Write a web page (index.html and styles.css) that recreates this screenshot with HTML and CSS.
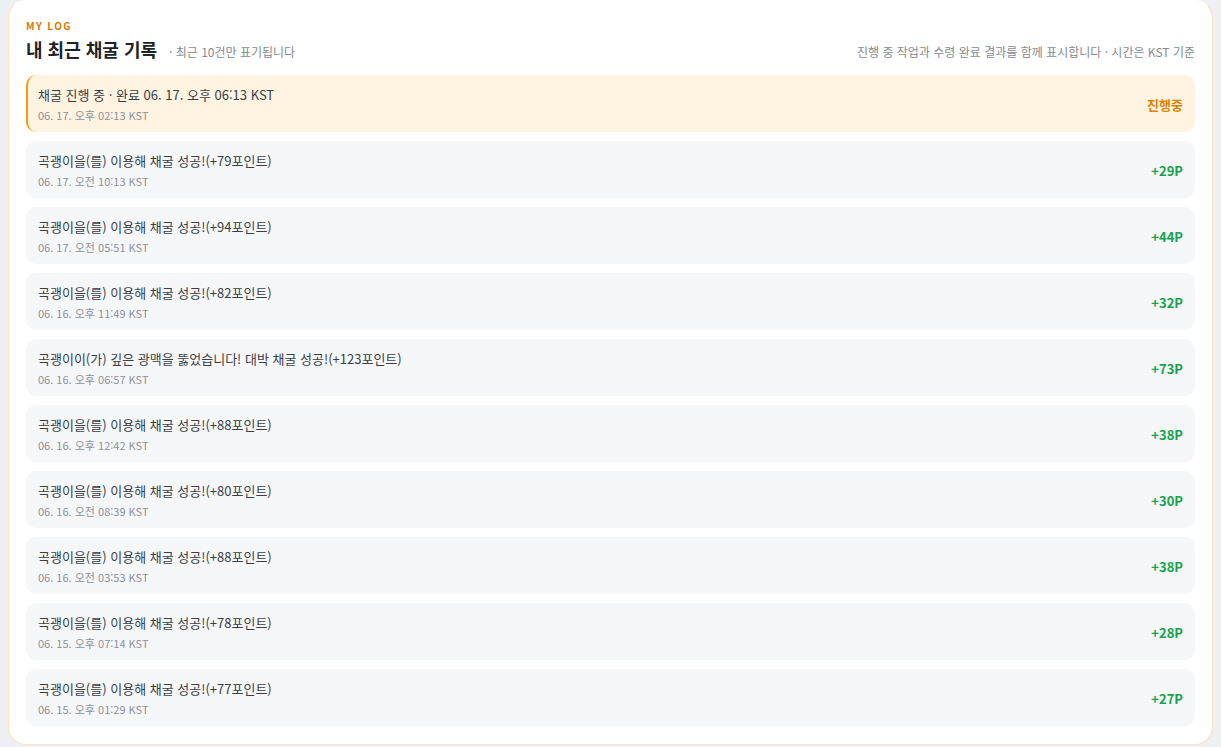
FILE: index.html
```html
<!DOCTYPE html>
<html lang="ko">
<head>
    <meta charset="UTF-8">
    <meta name="viewport" content="width=device-width, initial-scale=1.0">
    <title>내 최근 채굴 기록</title>
    <link rel="stylesheet" href="styles.css">
</head>
<body>
    <section class="log-card">
        <div class="eyebrow">MY LOG</div>
        <div class="log-head">
            <div class="head-left">
                <h2>내 최근 채굴 기록</h2>
                <span class="head-sub">· 최근 10건만 표기됩니다</span>
            </div>
            <span class="head-note">진행 중 작업과 수령 완료 결과를 함께 표시합니다 · 시간은 KST 기준</span>
        </div>
        <ul class="log-list">
            <li class="log-item pending">
                <div class="log-text">
                    <div class="log-title">채굴 진행 중 · 완료 06. 17. 오후 06:13 KST</div>
                    <div class="log-time">06. 17. 오후 02:13 KST</div>
                </div>
                <span class="log-value">진행중</span>
            </li>
            <li class="log-item">
                <div class="log-text">
                    <div class="log-title">곡괭이을(를) 이용해 채굴 성공!(+79포인트)</div>
                    <div class="log-time">06. 17. 오전 10:13 KST</div>
                </div>
                <span class="log-value">+29P</span>
            </li>
            <li class="log-item">
                <div class="log-text">
                    <div class="log-title">곡괭이을(를) 이용해 채굴 성공!(+94포인트)</div>
                    <div class="log-time">06. 17. 오전 05:51 KST</div>
                </div>
                <span class="log-value">+44P</span>
            </li>
            <li class="log-item">
                <div class="log-text">
                    <div class="log-title">곡괭이을(를) 이용해 채굴 성공!(+82포인트)</div>
                    <div class="log-time">06. 16. 오후 11:49 KST</div>
                </div>
                <span class="log-value">+32P</span>
            </li>
            <li class="log-item">
                <div class="log-text">
                    <div class="log-title">곡괭이이(가) 깊은 광맥을 뚫었습니다! 대박 채굴 성공!(+123포인트)</div>
                    <div class="log-time">06. 16. 오후 06:57 KST</div>
                </div>
                <span class="log-value">+73P</span>
            </li>
            <li class="log-item">
                <div class="log-text">
                    <div class="log-title">곡괭이을(를) 이용해 채굴 성공!(+88포인트)</div>
                    <div class="log-time">06. 16. 오후 12:42 KST</div>
                </div>
                <span class="log-value">+38P</span>
            </li>
            <li class="log-item">
                <div class="log-text">
                    <div class="log-title">곡괭이을(를) 이용해 채굴 성공!(+80포인트)</div>
                    <div class="log-time">06. 16. 오전 08:39 KST</div>
                </div>
                <span class="log-value">+30P</span>
            </li>
            <li class="log-item">
                <div class="log-text">
                    <div class="log-title">곡괭이을(를) 이용해 채굴 성공!(+88포인트)</div>
                    <div class="log-time">06. 16. 오전 03:53 KST</div>
                </div>
                <span class="log-value">+38P</span>
            </li>
            <li class="log-item">
                <div class="log-text">
                    <div class="log-title">곡괭이을(를) 이용해 채굴 성공!(+78포인트)</div>
                    <div class="log-time">06. 15. 오후 07:14 KST</div>
                </div>
                <span class="log-value">+28P</span>
            </li>
            <li class="log-item">
                <div class="log-text">
                    <div class="log-title">곡괭이을(를) 이용해 채굴 성공!(+77포인트)</div>
                    <div class="log-time">06. 15. 오후 01:29 KST</div>
                </div>
                <span class="log-value">+27P</span>
            </li>
        </ul>
    </section>
</body>
</html>
```

FILE: styles.css
```css
body {
    font-family: "Noto Sans CJK KR", "Noto Sans", sans-serif;
    background-color: #eef0f4;
    margin: 0;
    padding: 0 8px 2px;
    color: #333;
}

.log-card {
    background-color: white;
    border: 1px solid #fbe3bd;
    border-top-color: transparent;
    border-radius: 18px;
    padding: 18px 17px 18px;
}

.eyebrow {
    font-size: 10px;
    font-weight: 700;
    letter-spacing: 1.4px;
    color: #d97706;
    line-height: 14px;
}

.log-head {
    display: flex;
    justify-content: space-between;
    align-items: flex-end;
    margin-top: 3px;
    margin-bottom: 13px;
}

.head-left {
    display: flex;
    align-items: baseline;
    gap: 12px;
}

.log-head h2 {
    margin: 0;
    font-size: 18px;
    font-weight: 700;
    line-height: 26px;
    color: #1f2328;
}

.head-sub {
    font-size: 12px;
    color: #868b93;
}

.head-note {
    font-size: 12px;
    color: #868b93;
    line-height: 20px;
}

.log-list {
    list-style: none;
    margin: 0;
    padding: 0;
    display: flex;
    flex-direction: column;
    gap: 9px;
}

.log-item {
    display: flex;
    justify-content: space-between;
    align-items: center;
    height: 57px;
    box-sizing: border-box;
    padding: 1px 12px 0;
    background-color: #f6f7f9;
    border-radius: 10px;
}

.log-item.pending {
    background-color: #fff3e2;
    border-left: 2px solid #f59e0b;
    padding-left: 10px;
}

.log-title {
    font-size: 13px;
    line-height: 18px;
    color: #3a3f46;
}

.log-time {
    font-size: 11px;
    line-height: 16px;
    margin-top: 3px;
    color: #8d9199;
}

.log-value {
    font-size: 13px;
    font-weight: 700;
    color: #16a34a;
}

.pending .log-value {
    color: #e08400;
}
```
